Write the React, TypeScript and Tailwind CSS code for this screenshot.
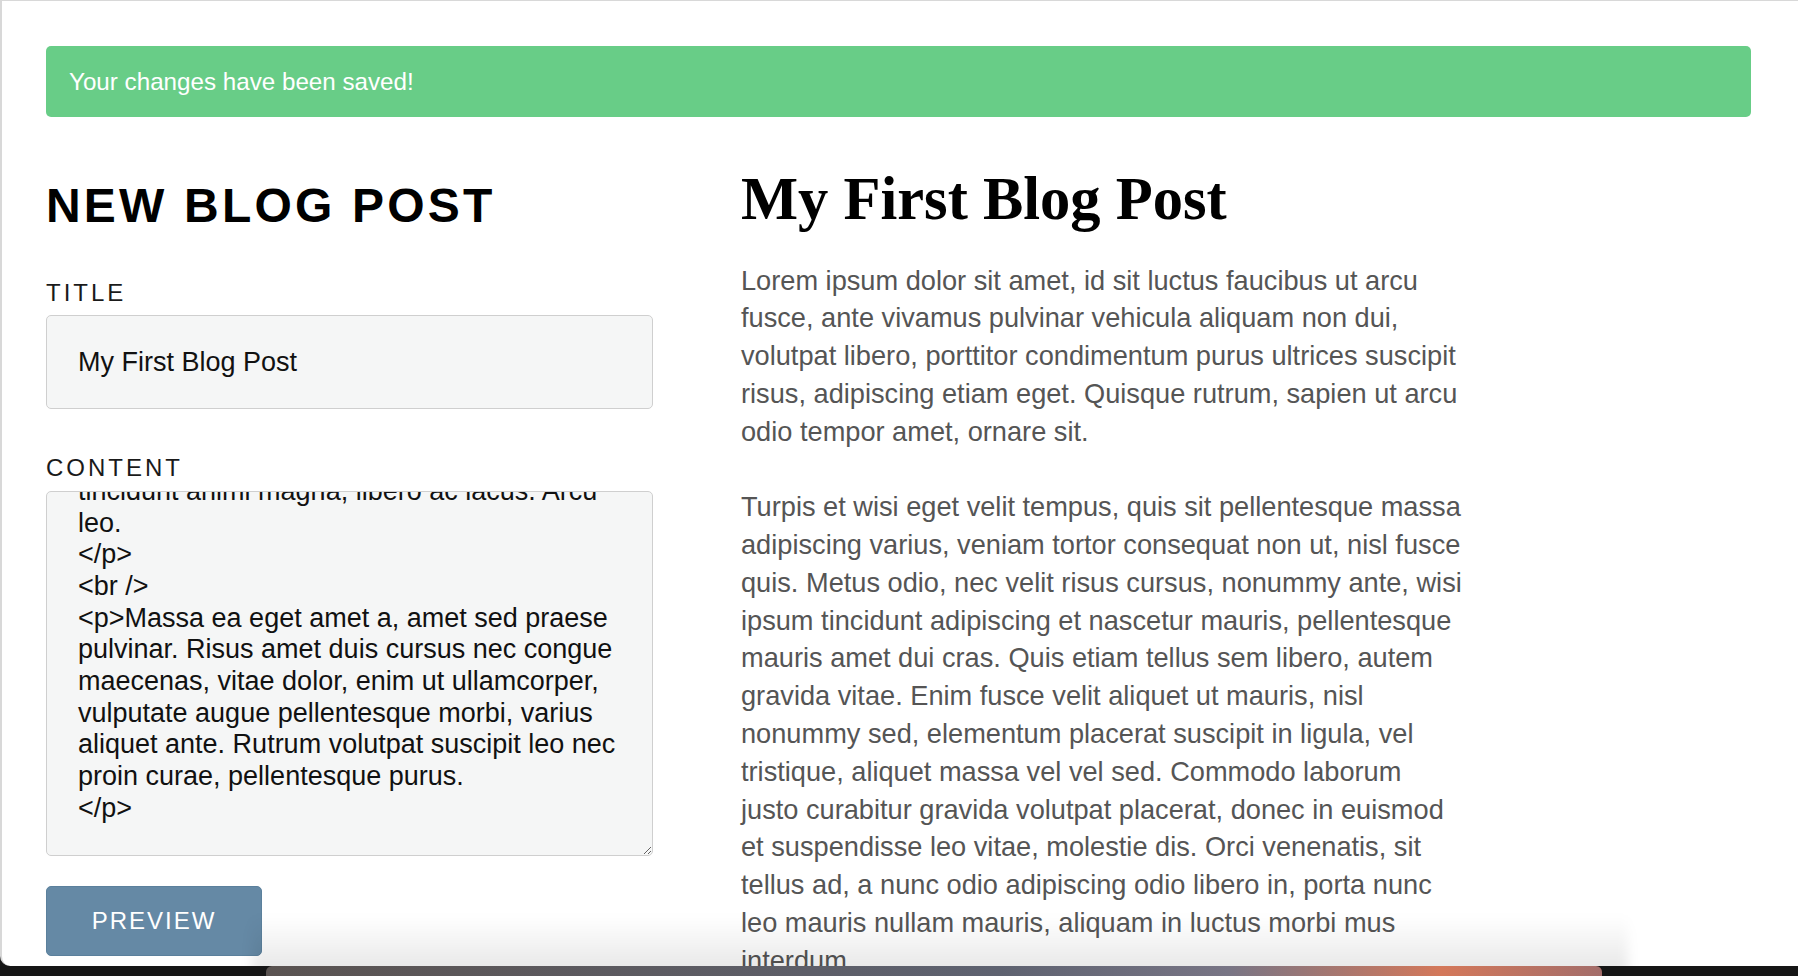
import { useEffect, useRef } from "react";

const draft = [
  "<p>Turpis et wisi eget velit tempus, quis sit",
  "pellentesque massa adipiscing varius, veniam",
  "tortor consequat non ut, nisl fusce quis.",
  "Metus odio, nec velit risus cursus, nonummy",
  "tincidunt animi magna, libero ac lacus. Arcu",
  "leo.",
  "</p>",
  "<br />",
  "<p>Massa ea eget amet a, amet sed praese",
  "pulvinar. Risus amet duis cursus nec congue",
  "maecenas, vitae dolor, enim ut ullamcorper,",
  "vulputate augue pellentesque morbi, varius",
  "aliquet ante. Rutrum volutpat suscipit leo nec",
  "proin curae, pellentesque purus.",
  "</p>",
].join("\n");

// preview lines, broken where the rendered post breaks them
const paragraphs = [
  [
    "Lorem ipsum dolor sit amet, id sit luctus faucibus ut arcu",
    "fusce, ante vivamus pulvinar vehicula aliquam non dui,",
    "volutpat libero, porttitor condimentum purus ultrices suscipit",
    "risus, adipiscing etiam eget. Quisque rutrum, sapien ut arcu",
    "odio tempor amet, ornare sit.",
  ],
  [
    "Turpis et wisi eget velit tempus, quis sit pellentesque massa",
    "adipiscing varius, veniam tortor consequat non ut, nisl fusce",
    "quis. Metus odio, nec velit risus cursus, nonummy ante, wisi",
    "ipsum tincidunt adipiscing et nascetur mauris, pellentesque",
    "mauris amet dui cras. Quis etiam tellus sem libero, autem",
    "gravida vitae. Enim fusce velit aliquet ut mauris, nisl",
    "nonummy sed, elementum placerat suscipit in ligula, vel",
    "tristique, aliquet massa vel vel sed. Commodo laborum",
    "justo curabitur gravida volutpat placerat, donec in euismod",
    "et suspendisse leo vitae, molestie dis. Orci venenatis, sit",
    "tellus ad, a nunc odio adipiscing odio libero in, porta nunc",
    "leo mauris nullam mauris, aliquam in luctus morbi mus",
    "interdum.",
  ],
];

export default function App() {
  const contentRef = useRef<HTMLTextAreaElement>(null);

  // the editor is scrolled to the end of the draft
  useEffect(() => {
    const el = contentRef.current;
    if (el) el.scrollTop = el.scrollHeight;
  }, []);

  return (
    <div className="flex h-screen flex-col overflow-hidden bg-[#171717] font-['Liberation_Sans',Arial,sans-serif]">
      <div className="relative h-[966px] shrink-0 overflow-hidden rounded-bl-[10px] border-l-2 border-t border-[#d8d8d8] bg-white pl-[44px] pr-[47px] pt-[45px]">
        <div className="flex h-[71px] items-center rounded-[5px] bg-[#68cd87] px-[23px] pt-[1px] text-[24.2px] text-white">
          Your changes have been saved!
        </div>

        <div className="flex gap-[88px]">
          {/* Editor */}
          <div className="w-[607px] shrink-0">
            <h1 className="mt-[65px] text-[48px] font-bold leading-none tracking-[3.2px] text-black">
              NEW BLOG POST
            </h1>

            <label className="mt-[51px] block text-[24px] leading-none tracking-[3px] text-[#1a1a1a]">
              TITLE
            </label>
            <input
              defaultValue="My First Blog Post"
              className="mt-[10px] h-[94px] w-full rounded-[5px] border border-[#cfcfcf] bg-[#f5f6f6] px-[31px] text-[27px] text-[#111] outline-none"
            />

            <label className="mt-[47px] block text-[24px] leading-none tracking-[3px] text-[#1a1a1a]">
              CONTENT
            </label>
            <textarea
              ref={contentRef}
              defaultValue={draft}
              wrap="off"
              className="mt-[11px] block h-[365px] w-full resize-y overflow-hidden whitespace-pre rounded-[5px] border border-[#cfcfcf] bg-[#f5f6f6] px-[31px] pb-[30px] pt-[31px] text-[27px] leading-[31.7px] text-[#111] outline-none"
            />

            <button className="mt-[30px] h-[70px] w-[216px] rounded-[5px] border border-[#5b809c] bg-[#6589a5] text-[24px] tracking-[2px] text-white">
              PREVIEW
            </button>
          </div>

          {/* Preview */}
          <div className="min-w-0">
            <h2 className="mt-[52px] font-['Liberation_Serif','Times_New_Roman',serif] text-[60.5px] font-bold leading-none text-black">
              My First Blog Post
            </h2>
            <div className="mt-[32px] text-[27.2px] leading-[37.8px] text-[#555]">
              {paragraphs.map((lines) => (
                <p key={lines[0]} className="mb-[37.8px]">
                  {lines.map((line) => (
                    <span key={line} className="block whitespace-nowrap">
                      {line}
                    </span>
                  ))}
                </p>
              ))}
            </div>
          </div>
        </div>

        {/* shadow cast by the dock */}
        <div className="pointer-events-none absolute bottom-[-10px] left-[250px] right-[170px] h-[60px] bg-[linear-gradient(to_bottom,rgba(0,0,0,0),rgba(0,0,0,0.1))] blur-[6px]" />
      </div>

      <div className="flex flex-1 bg-[#161616]">
        <div className="ml-[266px] w-[1336px] rounded-t-[6px] bg-[linear-gradient(90deg,#5a5351_0%,#5e6270_55%,#787585_72%,#d4785a_88%,#a36d6a_100%)]" />
      </div>
    </div>
  );
}
